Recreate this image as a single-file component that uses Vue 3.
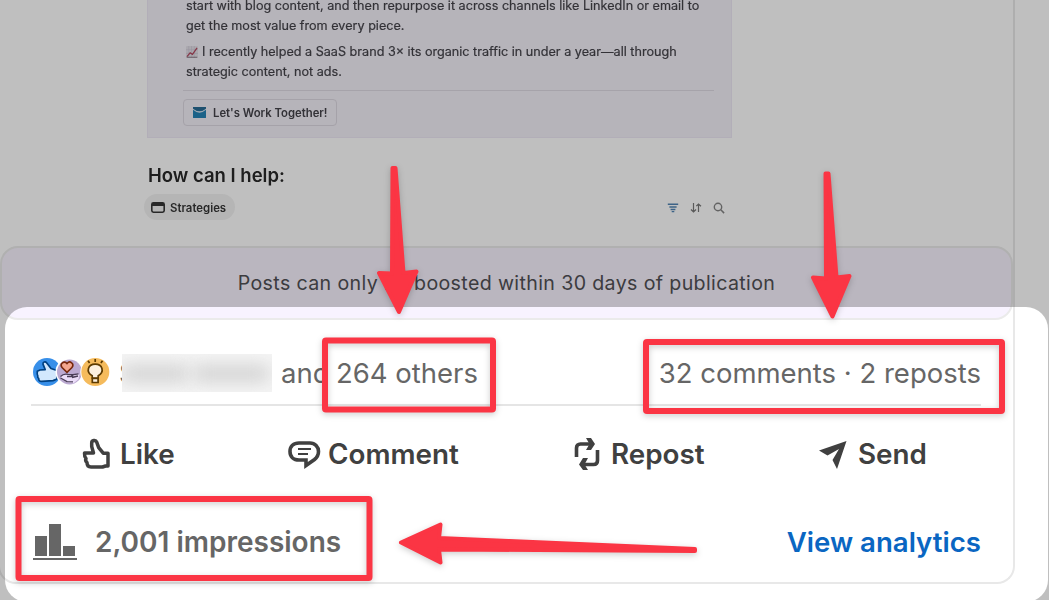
<template>
  <div class="page">
    <article class="post">
      <section class="preview">
        <div class="callout">
          <p class="callout__line line-a">start with blog content, and then repurpose it across channels like LinkedIn or email to</p>
          <p class="callout__line line-b">get the most value from every piece.</p>
          <p class="callout__line line-c">
            <svg class="chart-icon" viewBox="0 0 13 13">
              <rect width="13" height="13" rx="1" fill="#e3e0e8" />
              <path d="M3 0v13M6 0v13M9 0v13M0 4h13M0 8h13" stroke="#cbc4d3" stroke-width=".6" />
              <path d="M1 11.5l3.5-4 2.5 1.6L12 2" fill="none" stroke="#b34a61" stroke-width="1.4" />
              <path d="M.8 12.2h11.4" stroke="#82747f" />
            </svg>
            <span>I recently helped a SaaS brand 3× its organic traffic in under a year—all through</span>
          </p>
          <p class="callout__line line-d">strategic content, not ads.</p>
          <div class="callout__rule"></div>
          <button class="work-button">
            <svg class="mail-icon" viewBox="0 0 13 11">
              <rect width="13" height="11" rx=".6" fill="#2583b6" />
              <path d="M0 2.8Q6.5 8.6 13 2.8V1.5Q6.5 7 0 1.5z" fill="#d5e2ed" />
              <path d="M0 0h13v1.5Q6.5 6.6 0 1.5z" fill="#286b95" />
            </svg>
            <span class="work-button__label">Let's Work Together!</span>
          </button>
        </div>
        <h3 class="help-title">How can I help:</h3>
        <div class="toolbar">
          <span class="tab">
            <svg class="tab__icon" viewBox="0 0 14 11">
              <rect x=".8" y=".8" width="12.4" height="9.4" rx="1.6" fill="none" stroke="#363636" stroke-width="1.6" />
              <path d="M1 1h12v3H1z" fill="#363636" />
            </svg>
            <span class="tab__label">Strategies</span>
          </span>
          <div class="tools">
            <svg viewBox="0 0 12 12"><path d="M.8 2.2h10.4M2.4 5h7.2M3.6 7.5h4.8M4.7 9.6h2.6" stroke="#5285b4" stroke-width="1.4" /></svg>
            <svg viewBox="0 0 12 12"><path d="M3.5 1v9M1 7.5L3.5 10 6 7.5M8.5 10V2M6.3 4.2L8.5 2l2.5 2.2" fill="none" stroke="#777" stroke-width="1.2" /></svg>
            <svg viewBox="0 0 12 12"><circle cx="5" cy="5" r="3.7" fill="none" stroke="#858585" stroke-width="1.4" /><path d="M7.8 7.8l3.3 3.3" stroke="#858585" stroke-width="1.5" /></svg>
          </div>
        </div>
      </section>

      <div class="banner"><span class="banner__text">Posts can only be boosted within 30 days of publication</span></div>

      <div class="social">
        <div class="reactions">
          <svg width="78" height="30" viewBox="0 0 78 30">
            <circle cx="15" cy="15" r="14" fill="#378fe9" />
            <path d="M5.3 14.2L8 13l5.2-.4-2.200-5.500c-.4-2 2.300-3 3.600-1.400L19 11.500l6 2v8.500l-4 1.600-11.500.800c-2 0-3-1.200-2.800-3-.9-.6-1.200-1.500-.9-2.500-.7-.8-.7-3-.5-4.700z" fill="#d2e8fd" stroke="#004182" stroke-width="1.700" stroke-linejoin="round" />
            <circle cx="37.500" cy="15" r="14" fill="#fff" />
            <circle cx="37.500" cy="15" r="12.500" fill="#bba9d1" />
            <path d="M29 18.500l4-1.300 5-.2 9.500.2-1 5-5 4-6-.6-6-3z" fill="#eadcf8" />
            <path d="M35 15.400l-4.700-4.600c-3.300-4.200 2-7.800 4.700-4.300 2.800-3.500 8 .1 4.700 4.300z" fill="#f3a68f" stroke="#77280c" stroke-width="1.600" />
            <path d="M28.500 19.500c3-3 5.500-2.600 7.500-2.100l4 .2c1.500.8.6 1.900-.8 1.900H35M39 18l7.500-1.200M40 20.500l6-1.500M28.500 21l6.500 3.600 6 .2" fill="none" stroke="#493d57" stroke-width="1.300" />
            <circle cx="63.300" cy="15" r="15" fill="#fff" />
            <circle cx="63.300" cy="15" r="14" fill="#f5bb5c" />
            <path d="M60.200 21v-2.300c-6.700-4-4.300-11.500 3-11.500s9.700 7.500 3 11.500V21z" fill="#fcf0de" stroke="#5d3b01" stroke-width="1.700" />
            <path d="M60.300 21.500h5.800v4h-5.800z" fill="#fcf0de" stroke="#5d3b01" stroke-width="1.700" />
            <path d="M63.200 2v3M56 3.800l1.600 2.300M70.500 3.800l-1.600 2.300" stroke="#5d3b01" stroke-width="1.700" />
          </svg>
          <span class="initial">S</span>
          <span class="hidden-name"><i class="smudge"></i><i class="smudge smudge--right"></i></span>
          <span class="and">and</span>
          <span class="others">264 others</span>
        </div>
        <span class="counts">32 comments · 2 reposts</span>
      </div>

      <div class="actions">
        <button class="action like">
          <svg width="28" height="32" viewBox="0 0 28 32"><path d="M2.500 15h9L9.700 8.500V5c0-2.800 4-3.500 5-.8l2 5.500 4.500 5.500H26V28h-2.500l-3 1H9c-3 0-4-2-4-4.500-1.200-1-1.700-2.500-1-4-1.300-1.300-1.600-3.200-1.500-5.500z" fill="none" stroke="#404040" stroke-width="3.500" stroke-linejoin="round" /></svg>
          <span>Like</span>
        </button>
        <button class="action comment">
          <svg width="33" height="29" viewBox="0 0 33 29"><path d="M11 2h11c5 0 8.500 4 8.500 8.500 0 3.500-1.500 6-4 8L18 24.500V19h-7C5.500 19 2 15.500 2 10.500S5.500 2 11 2z" fill="none" stroke="#404040" stroke-width="3.600" /><path d="M10 8h13M10 13h10" stroke="#404040" stroke-width="2" /></svg>
          <span>Comment</span>
        </button>
        <button class="action repost">
          <svg width="26" height="32" viewBox="0 0 26 32"><path d="M2.500 19V10c0-2.500 1.500-4 4-4H17M23.500 12v10.500c0 2.500-1.500 4-4 4H8" fill="none" stroke="#404040" stroke-width="3.600" /><path d="M12 0h5l4 6-4 6h-5l3.500-6zM14 20H9l-4 6.500 4 5.500h5l-3.500-5.500z" fill="#404040" /></svg>
          <span>Repost</span>
        </button>
        <button class="action send">
          <svg width="28" height="28" viewBox="0 0 28 28"><path d="M27.500 0L0 9.500l8.500 5L20 8l-6.500 11 4.500 9z" fill="#404040" /></svg>
          <span>Send</span>
        </button>
      </div>

      <div class="analytics">
        <div class="impressions">
          <svg width="44" height="36" viewBox="0 0 44 36" shape-rendering="crispEdges"><path d="M2 12h12v20H2zM16 0h12v32H16zM30 22h12v10H30zM0 34h44v2H0z" fill="#666" /></svg>
          <span class="impressions__label">2,001 impressions</span>
        </div>
        <a class="analytics__link">View analytics</a>
      </div>
    </article>

    <div class="spotlight"></div>

    <svg class="marks" width="1049" height="600" viewBox="0 0 1049 600">
      <g class="marks__boxes">
        <rect v-for="box in boxes" :key="box.y" :x="box.x" :y="box.y" :width="box.w" :height="box.h" rx="1" />
      </g>
      <g class="marks__arrows">
        <path v-for="arrow in arrows" :key="arrow" :d="arrow" />
      </g>
    </svg>
  </div>
</template>

<script setup>
const boxes = [
  { x: 325, y: 340.5, w: 168, h: 69 },
  { x: 646, y: 342, w: 356, h: 69 },
  { x: 18.5, y: 499, w: 351, h: 79 }
]

const arrows = [
  'M392.500 168h3l8 105 13-1.500L399 312l-20-39 13 .5z',
  'M825.500 173.500h3l8 104 13-1.500-17 40.500-19.500-39 13 1z',
  'M401 542.500l39.500-18-1.500 13.500 256 11v2l-256-1.500 1.500 13z'
]
</script>

<style>
body {
  overflow: hidden;
}
</style>

<style scoped>
.page {
  position: relative;
  width: 1049px;
  height: 600px;
  overflow: hidden;
  background: #fff;
  font-family: Inter, "Liberation Sans", sans-serif;
}

.post {
  box-sizing: border-box;
  width: 1017px;
  height: 584px;
  margin-left: -2px;
  border: 2px solid #e8e8e8;
  border-top: 0;
  border-radius: 0 0 18px 18px;
  display: flex;
  flex-direction: column;
}

.preview {
  height: 246px;
  padding: 0 283px 0 147px;
  filter: blur(0.4px);
}

p,
h3 {
  margin: 0;
}

.callout {
  box-sizing: border-box;
  width: 585px;
  height: 138px;
  padding: 0 17px 0 38px;
  background: #f3f0f8;
  border: 1px solid #eee9f6;
  border-width: 0 1px 1px;
  font-size: 12.63px;
  color: #44434a;
  -webkit-text-stroke: 0.2px;
}

.callout__line {
  height: 20px;
  line-height: 20px;
  white-space: nowrap;
}

.line-a {
  height: 16px;
  line-height: 12px;
}

.line-c {
  display: flex;
  align-items: center;
  gap: 4px;
  margin-top: 6px;
}

.chart-icon {
  width: 12px;
  height: 12px;
}

.callout__rule {
  height: 1px;
  margin: 8px 0 8px -3px;
  background: #dedae3;
}

button {
  font-family: inherit;
  background: none;
  border: 0;
  padding: 0;
}

.work-button {
  display: flex;
  align-items: center;
  gap: 7px;
  width: 154px;
  height: 27px;
  margin-left: -3px;
  padding-left: 9px;
  border: 1px solid #dcd8e2;
  border-radius: 4px;
  font-size: 11.3px;
  font-weight: 600;
  color: #44434a;
  white-space: nowrap;
  -webkit-text-stroke: 0;
}

.mail-icon {
  width: 13px;
  height: 11px;
}

.help-title {
  margin-top: 25px;
  margin-left: 1px;
  font-size: 18.5px;
  font-weight: 600;
  line-height: 24px;
  color: #292929;
}

.toolbar {
  display: flex;
  align-items: center;
  justify-content: space-between;
  width: 578px;
  height: 26px;
  margin-top: 7px;
}

.tab {
  display: flex;
  align-items: center;
  gap: 5px;
  box-sizing: border-box;
  width: 91px;
  height: 26px;
  margin-left: -3px;
  padding: 1px 0 0 7px;
  border-radius: 13px;
  background: #f2f2f2;
  font-size: 11.4px;
  font-weight: 600;
  color: #363636;
}

.tab__icon {
  width: 14px;
  height: 11px;
}

.tools {
  display: flex;
  gap: 11px;
  padding-top: 2px;
}

.tools svg {
  width: 12px;
  height: 12px;
}

.banner {
  display: flex;
  align-items: center;
  justify-content: center;
  box-sizing: border-box;
  width: 1013px;
  height: 74px;
  flex: none;
  border: 2px solid #ebebeb;
  border-radius: 18px;
  background: #f8f3ff;
  color: #515055;
  font-size: 19.6px;
  letter-spacing: 0.37px;
  white-space: nowrap;
}

.social {
  display: flex;
  align-items: center;
  justify-content: space-between;
  box-sizing: border-box;
  width: 950px;
  height: 86px;
  flex: none;
  margin-left: 31px;
  padding-top: 22px;
  border-bottom: 2px solid #e5e5e5;
  color: #666;
  font-size: 27.5px;
  white-space: nowrap;
}

.reactions {
  display: flex;
  align-items: center;
}

.reactions svg {
  margin: 0 0 2px 1px;
}

.initial {
  width: 3px;
  margin-left: 9px;
  overflow: hidden;
}

.hidden-name {
  position: relative;
  width: 150px;
  height: 38px;
  overflow: hidden;
  background: #f5f5f5;
}

.smudge {
  position: absolute;
  left: 0;
  top: 12px;
  width: 66px;
  height: 15px;
  background: #cdcdcd;
  filter: blur(9px);
}

.smudge--right {
  left: 72px;
  width: 75px;
}

.and {
  width: 45px;
  margin-left: 9px;
  overflow: hidden;
}

.others {
  margin-left: 10px;
}

.actions {
  display: flex;
  height: 96px;
  margin-bottom: 2px;
  flex: none;
  color: #404040;
}

.action {
  display: flex;
  align-items: center;
  color: #404040;
  font-size: 27.8px;
  font-weight: 600;
  white-space: nowrap;
}

.like {
  width: 206px;
  margin-left: 82px;
  gap: 10px;
}

.comment {
  width: 286px;
  gap: 7px;
}

.comment svg {
  margin-top: 2px;
}

.repost {
  width: 245px;
  gap: 11px;
}

.send {
  gap: 11px;
}

.send svg {
  margin-top: 2px;
}

.analytics {
  display: flex;
  align-items: center;
  justify-content: space-between;
  width: 948px;
  height: 76px;
  margin-left: 33px;
  font-weight: 600;
  color: #666;
}

.impressions {
  display: flex;
  align-items: center;
  gap: 18px;
  font-size: 28px;
}

.analytics__link {
  font-size: 27.6px;
  color: #0a66c2;
}

.spotlight {
  position: absolute;
  left: 5px;
  top: 307px;
  width: 1043px;
  height: 295px;
  border-radius: 22px;
  box-shadow: 0 0 0 1100px rgba(0, 0, 0, 0.25);
}

.marks {
  position: absolute;
  left: 0;
  top: 0;
  filter: drop-shadow(0 2px 3px rgba(0, 0, 0, 0.2));
}

.marks__boxes {
  fill: none;
  stroke: #fb3544;
  stroke-width: 6;
  stroke-linejoin: round;
}

.marks__arrows {
  fill: #fb3544;
  stroke: #fb3544;
  stroke-width: 4;
  stroke-linejoin: round;
}
</style>
